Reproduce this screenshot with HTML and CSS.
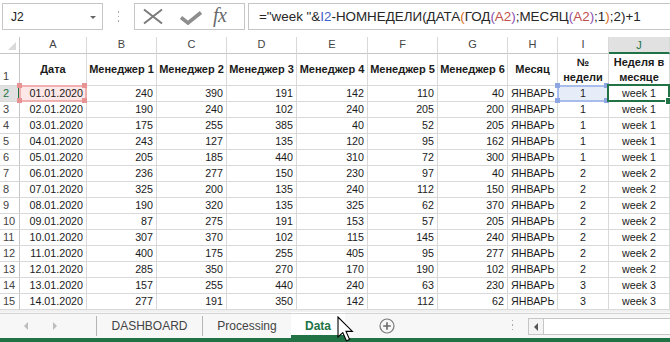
FILE: index.html
```html
<!DOCTYPE html>
<html lang="ru">
<head>
<meta charset="utf-8">
<title>Data</title>
<link rel="stylesheet" href="styles.css">
</head>
<body>
<div class="app">
  <div class="fbar">
    <div class="namebox"><span class="nb-text">J2</span><span class="caret"></span></div>
    <div class="vdots"><i></i><i></i><i></i></div>
    <div class="fnbox">
      <svg class="ico-x" width="22" height="17" viewBox="0 0 22 17"><path d="M2 1.5 L20 15.5 M20 1.5 L2 15.5" stroke="#7b7b7b" stroke-width="2" fill="none"/></svg>
      <svg class="ico-ok" width="24" height="14" viewBox="0 0 24 14"><path d="M2 6.5 L9 12 L22 1.5" stroke="#8e8e8e" stroke-width="3.6" fill="none" stroke-linejoin="miter"/></svg>
      <span class="fx">fx</span>
    </div>
    <div class="finput">="week "&amp;<span class="rb">I2</span>-НОМНЕДЕЛИ(ДАТА<span class="p2">(</span>ГОД<span class="p3">(</span><span class="rr">A2</span><span class="p3">)</span>;МЕСЯЦ<span class="p3">(</span><span class="rr">A2</span><span class="p3">)</span>;1<span class="p2">)</span>;2)+1</div>
  </div>

  <div class="sheet">
    <div class="corner"><span class="tri"></span></div>
    <div class="ch">A</div><div class="ch">B</div><div class="ch">C</div><div class="ch">D</div><div class="ch">E</div><div class="ch">F</div><div class="ch">G</div><div class="ch">H</div><div class="ch">I</div><div class="ch sel">J</div>

    <div class="rh rh1">1</div>
    <div class="c hd">Дата</div><div class="c hd">Менеджер 1</div><div class="c hd">Менеджер 2</div><div class="c hd">Менеджер 3</div><div class="c hd">Менеджер 4</div><div class="c hd">Менеджер 5</div><div class="c hd">Менеджер 6</div><div class="c hd">Месяц</div><div class="c hd">№<br>недели</div><div class="c hd">Неделя в<br>месяце</div>

    <div class="rh sel">2</div>
    <div class="c r refa">01.01.2020</div><div class="c r">240</div><div class="c r">390</div><div class="c r">191</div><div class="c r">142</div><div class="c r">110</div><div class="c r">40</div><div class="c m">ЯНВАРЬ</div><div class="c m refi">1</div><div class="c m act">week 1</div>

    <div class="rh">3</div>
    <div class="c r">02.01.2020</div><div class="c r">190</div><div class="c r">240</div><div class="c r">102</div><div class="c r">240</div><div class="c r">205</div><div class="c r">200</div><div class="c m">ЯНВАРЬ</div><div class="c m">1</div><div class="c m">week 1</div>

    <div class="rh">4</div>
    <div class="c r">03.01.2020</div><div class="c r">175</div><div class="c r">255</div><div class="c r">385</div><div class="c r">40</div><div class="c r">52</div><div class="c r">205</div><div class="c m">ЯНВАРЬ</div><div class="c m">1</div><div class="c m">week 1</div>

    <div class="rh">5</div>
    <div class="c r">04.01.2020</div><div class="c r">243</div><div class="c r">127</div><div class="c r">135</div><div class="c r">120</div><div class="c r">95</div><div class="c r">162</div><div class="c m">ЯНВАРЬ</div><div class="c m">1</div><div class="c m">week 1</div>

    <div class="rh">6</div>
    <div class="c r">05.01.2020</div><div class="c r">205</div><div class="c r">185</div><div class="c r">440</div><div class="c r">310</div><div class="c r">72</div><div class="c r">300</div><div class="c m">ЯНВАРЬ</div><div class="c m">1</div><div class="c m">week 1</div>

    <div class="rh">7</div>
    <div class="c r">06.01.2020</div><div class="c r">236</div><div class="c r">277</div><div class="c r">150</div><div class="c r">230</div><div class="c r">97</div><div class="c r">40</div><div class="c m">ЯНВАРЬ</div><div class="c m">2</div><div class="c m">week 2</div>

    <div class="rh">8</div>
    <div class="c r">07.01.2020</div><div class="c r">325</div><div class="c r">200</div><div class="c r">135</div><div class="c r">240</div><div class="c r">112</div><div class="c r">150</div><div class="c m">ЯНВАРЬ</div><div class="c m">2</div><div class="c m">week 2</div>

    <div class="rh">9</div>
    <div class="c r">08.01.2020</div><div class="c r">190</div><div class="c r">320</div><div class="c r">135</div><div class="c r">325</div><div class="c r">62</div><div class="c r">370</div><div class="c m">ЯНВАРЬ</div><div class="c m">2</div><div class="c m">week 2</div>

    <div class="rh">10</div>
    <div class="c r">09.01.2020</div><div class="c r">87</div><div class="c r">275</div><div class="c r">191</div><div class="c r">153</div><div class="c r">57</div><div class="c r">205</div><div class="c m">ЯНВАРЬ</div><div class="c m">2</div><div class="c m">week 2</div>

    <div class="rh">11</div>
    <div class="c r">10.01.2020</div><div class="c r">307</div><div class="c r">370</div><div class="c r">102</div><div class="c r">115</div><div class="c r">145</div><div class="c r">240</div><div class="c m">ЯНВАРЬ</div><div class="c m">2</div><div class="c m">week 2</div>

    <div class="rh">12</div>
    <div class="c r">11.01.2020</div><div class="c r">400</div><div class="c r">175</div><div class="c r">255</div><div class="c r">405</div><div class="c r">95</div><div class="c r">277</div><div class="c m">ЯНВАРЬ</div><div class="c m">2</div><div class="c m">week 2</div>

    <div class="rh">13</div>
    <div class="c r">12.01.2020</div><div class="c r">285</div><div class="c r">350</div><div class="c r">270</div><div class="c r">170</div><div class="c r">190</div><div class="c r">102</div><div class="c m">ЯНВАРЬ</div><div class="c m">2</div><div class="c m">week 2</div>

    <div class="rh">14</div>
    <div class="c r">13.01.2020</div><div class="c r">157</div><div class="c r">255</div><div class="c r">440</div><div class="c r">240</div><div class="c r">63</div><div class="c r">230</div><div class="c m">ЯНВАРЬ</div><div class="c m">3</div><div class="c m">week 3</div>

    <div class="rh">15</div>
    <div class="c r">14.01.2020</div><div class="c r">277</div><div class="c r">191</div><div class="c r">350</div><div class="c r">142</div><div class="c r">112</div><div class="c r">62</div><div class="c m">ЯНВАРЬ</div><div class="c m">3</div><div class="c m">week 3</div>
  </div>

  <div class="tabbar">
    <div class="nav">
      <span class="arr arr-l"></span>
      <span class="arr arr-r"></span>
    </div>
    <div class="tab">DASHBOARD</div>
    <div class="tab">Processing</div>
    <div class="tab active">Data</div>
    <div class="addsheet">
      <svg width="16" height="16" viewBox="0 0 16 16"><circle cx="8" cy="8" r="7" fill="none" stroke="#7a7a7a" stroke-width="1.2"/><path d="M8 4.2 V11.8 M4.2 8 H11.8" stroke="#6a6a6a" stroke-width="1.6"/></svg>
    </div>
    <div class="vdots vdots-tab"><i></i><i></i><i></i></div>
    <div class="hscroll"><div class="hs-btn"><span class="hs-arr"></span></div></div>
  </div>
  <div class="statusline"></div>

  <svg class="cursor" width="17" height="26" viewBox="0 0 17 26"><path d="M1 1 L1 21 L5.8 16.6 L9.4 24.8 L12.6 23.4 L9 15.4 L15.4 15.4 Z" fill="#fff" stroke="#000" stroke-width="1.1" stroke-linejoin="miter"/></svg>
</div>
</body>
</html>
```

FILE: styles.css
```css
* { box-sizing: border-box; }
html, body { margin: 0; padding: 0; background: #fff; }
body { width: 670px; height: 342px; overflow: hidden; font-family: "Liberation Sans", Arial, sans-serif; color: #1f1f1f; }
.app { position: relative; width: 670px; height: 342px; overflow: hidden; }

/* formula bar */
.fbar { height: 37px; display: flex; align-items: flex-start; padding: 3px 0 0 2px; }
.namebox { width: 101px; height: 27px; border: 1px solid #c6c6c6; display: flex; align-items: center; justify-content: space-between; padding: 0 6px 0 8px; font-size: 12px; color: #222; }
.caret { width: 0; height: 0; border-left: 3.5px solid transparent; border-right: 3.5px solid transparent; border-top: 3.5px solid #666; margin-top: 1px; }
.vdots { width: 31px; height: 27px; display: flex; flex-direction: column; align-items: center; justify-content: center; gap: 3px; }
.vdots i { display: block; width: 1px; height: 1.5px; background: #a8a8a8; }
.fnbox { width: 111px; height: 27px; border: 1px solid #c6c6c6; display: flex; align-items: center; padding-left: 7px; }
.ico-x { margin-right: 15px; }
.ico-ok { margin-right: 10px; margin-top: 2px; }
.fx { font-family: "Liberation Serif", "Times New Roman", serif; font-style: italic; font-size: 20px; color: #6a6a6a; letter-spacing: -0.5px; margin-top: -2px; }
.finput { flex: 1; height: 27px; margin-left: 3px; border: 1px solid #c6c6c6; border-right: none; font-size: 13.4px; line-height: 25px; padding-left: 10px; color: #262626; white-space: nowrap; }
.rb { color: #3e63c9; }
.rr { color: #c0504d; }
.p2 { color: #d86b20; }
.p3 { color: #8a4fb0; }

/* sheet grid */
.sheet { display: grid; grid-template-columns: 20px 67px 70px 70px 70px 71px 70px 70px 50px 51px 61px; grid-template-rows: 17px 32px repeat(14, 16px); font-size: 10.7px; }
.sheet > div { border-right: 1px solid #d9d9d9; border-bottom: 1px solid #d9d9d9; white-space: nowrap; overflow: visible; line-height: 15px; }
.corner { display: flex; align-items: flex-end; justify-content: flex-end; padding: 0 3px 3px 0; border-right-color: #c6c6c6 !important; border-bottom-color: #c6c6c6 !important; }
.tri { width: 8px; height: 8px; background: #dadada; clip-path: polygon(100% 0, 100% 100%, 0 100%); }
.ch { text-align: center; font-size: 11px; color: #444; line-height: 17px; border-bottom-color: #c6c6c6 !important; }
.ch.sel { background: #e1e1e1; color: #217346; border-bottom: 2px solid #217346 !important; line-height: 16px; }
.rh { font-size: 11px; color: #444; padding-left: 3px; border-right-color: #c6c6c6 !important; }
.rh1 { display: flex; align-items: flex-end; padding-bottom: 1px; }
.rh.sel { background: #e1e1e1; color: #217346; border-right: 2px solid #217346 !important; }
.c { padding: 0 3px; color: #1a1a1a; }
.hd { font-weight: bold; font-size: 11px; text-align: center; display: flex; align-items: center; justify-content: center; line-height: 15px; padding: 0 1px; }
.r { text-align: right; }
.m { text-align: center; }

/* reference highlights */
.refa, .refi, .act { position: relative; }
.refa { background: #fde7e7; }
.refa::before { content: ""; position: absolute; left: -1px; top: -1px; right: -1px; bottom: -1px; border: 2px solid #efb0b0; }
.refa::after { content: ""; position: absolute; left: -3px; top: -3px; width: 5px; height: 5px; background: #e89393; box-shadow: 65px 0 0 #e89393, 0 15px 0 #e89393, 65px 15px 0 #e89393; }
.refi { background: #e6ecf8; }
.refi::before { content: ""; position: absolute; left: -1px; top: -1px; right: -1px; bottom: -1px; border: 2px solid #a9bdec; }
.refi::after { content: ""; position: absolute; left: -3px; top: -3px; width: 5px; height: 5px; background: #8ea7e2; box-shadow: 49px 0 0 #8ea7e2, 0 15px 0 #8ea7e2, 49px 15px 0 #8ea7e2; }
.act::before { content: ""; position: absolute; left: -2px; top: -2px; right: -1px; bottom: -1px; border: 2px solid #217346; }
.act::after { content: ""; position: absolute; right: -4px; bottom: -4px; width: 6px; height: 6px; background: #217346; border: 1px solid #fff; }

/* sheet tabs */
.tabbar { height: 28px; border-top: 2px solid #f0f0f0; background: #f7f7f7; display: flex; align-items: stretch; position: relative; }
.tabbar::before { content: ""; position: absolute; left: 0; right: 0; top: 1px; height: 1px; background: #d4d4d4; }
.nav { width: 97px; display: flex; align-items: center; padding-left: 24px; gap: 25px; border-right: 1px solid #b5b5b5; margin: 4px 0 2px; }
.arr { width: 0; height: 0; border-top: 4px solid transparent; border-bottom: 4px solid transparent; }
.arr-l { border-right: 4px solid #bdbdbd; }
.arr-r { border-left: 4px solid #bdbdbd; }
.tab { font-size: 12px; color: #444; display: flex; align-items: center; justify-content: center; padding-top: 2px; }
.tab:nth-of-type(2) { width: 106px; border-right: 1px solid #b5b5b5; margin: 4px 0 2px; padding-top: 0; }
.tab:nth-of-type(3) { width: 88px; }
.tab.active { width: 54px; background: #fff; color: #217346; font-weight: bold; border-bottom: 3px solid #217346; padding-top: 4px; }
.addsheet { width: 78px; display: flex; align-items: center; justify-content: center; padding-top: 2px; padding-left: 6px; }
.vdots-tab { width: 20px; height: auto; margin-left: 79px; }
.hscroll { flex: 1; margin: 6px 0 3px 6px; border: 1px solid #c6c6c6; border-right: none; background: #fff; display: flex; }
.hs-btn { width: 15px; border-right: 1px solid #c6c6c6; display: flex; align-items: center; justify-content: center; background: #f4f4f4; }
.hs-arr { width: 0; height: 0; border-top: 4px solid transparent; border-bottom: 4px solid transparent; border-right: 4px solid #555; }
.statusline { height: 4px; background: #217346; }

.cursor { position: absolute; left: 337px; top: 316px; }
```
